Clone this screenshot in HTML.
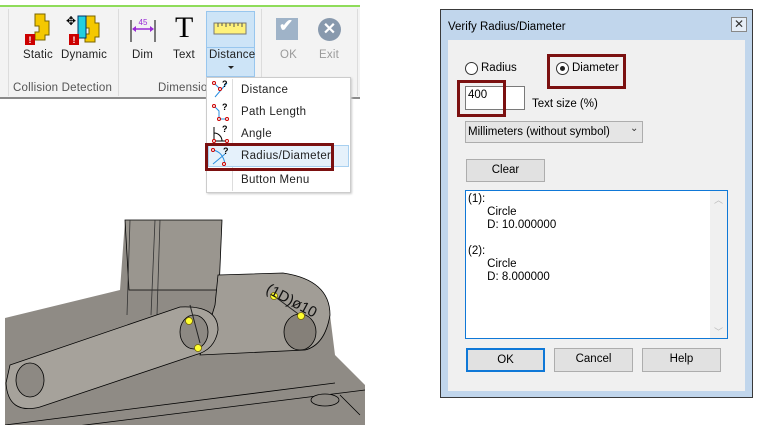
<!DOCTYPE html>
<html><head><meta charset="utf-8"><style>
*{margin:0;padding:0;box-sizing:border-box}
body{width:760px;height:425px;background:#fff;position:relative;overflow:hidden;font-family:"Liberation Sans",sans-serif;font-size:11.5px;color:#000}
.a{position:absolute}
.rib{left:0;top:7px;width:360px;height:92px;background:#f3f3f3;border-bottom:2px solid #8a8a8a}
.lbl{position:absolute;font-size:11.5px;color:#222;letter-spacing:0.2px}
.gl{position:absolute;font-size:11.5px;color:#555;letter-spacing:0.2px}
.sep{position:absolute;width:1px;background:#dcdcdc}
.mi{position:absolute;left:241px;font-size:11.5px;color:#222;letter-spacing:0.3px}
.red{position:absolute;border:3px solid #7b1010}
.btn{position:absolute;background:#e1e1e1;border:1px solid #adadad;text-align:center;font-size:11.5px;line-height:21px}
</style></head><body>
<div class="a" style="left:0;top:5px;width:360px;height:2px;background:#8fdc5a"></div>
<div class="a rib"></div>
<div class="sep" style="left:8px;top:9px;height:87px"></div>
<div class="sep" style="left:118px;top:9px;height:87px"></div>
<div class="sep" style="left:261px;top:9px;height:87px"></div>
<div class="sep" style="left:357px;top:9px;height:87px"></div>
<svg class="a" style="left:22px;top:12px" width="90" height="36">
 <path d="M13 2h10v7h4v14h-4v5h-10v-8h4v-6h-4z" fill="#f4c800" stroke="#7a6400"/>
 <rect x="3" y="22" width="10" height="11" fill="#c00"/><text x="8" y="31" font-size="9" font-weight="bold" fill="#fff" text-anchor="middle">!</text>
 <path d="M63 4h10v7h4v14h-4v5h-10v-8h4v-6h-4z" fill="#f4c800" stroke="#7a6400"/>
 <path d="M56 4h8v22h-8z" fill="#22cfe0" stroke="#036"/>
 <text x="49" y="13" font-size="12" text-anchor="middle">✥</text>
 <rect x="47" y="22" width="10" height="11" fill="#c00"/><text x="52" y="31" font-size="9" font-weight="bold" fill="#fff" text-anchor="middle">!</text>
</svg>
<div class="lbl" style="left:23px;top:49px">Static</div>
<div class="lbl" style="left:61px;top:49px">Dynamic</div>
<div class="gl" style="left:13px;top:82px">Collision Detection</div>
<svg class="a" style="left:128px;top:16px" width="30" height="26">
 <line x1="3" y1="4" x2="3" y2="26" stroke="#000"/><line x1="27" y1="4" x2="27" y2="26" stroke="#000"/>
 <line x1="5" y1="13" x2="25" y2="13" stroke="#9a2bd6" stroke-width="1.5"/>
 <path d="M4 13l4-3v6zM26 13l-4-3v6z" fill="#9a2bd6"/>
 <text x="15" y="9" font-size="8" fill="#9a2bd6" text-anchor="middle">45</text>
</svg>
<div class="lbl" style="left:132px;top:49px">Dim</div>
<div class="a" style="left:175px;top:11px;font-family:'Liberation Serif',serif;font-size:30px">T</div>
<div class="lbl" style="left:173px;top:49px">Text</div>
<div class="a" style="left:206px;top:11px;width:49px;height:66px;background:#cde4f7;border:1px solid #98c6ee"></div>
<div class="a" style="left:207px;top:47px;width:47px;height:1px;background:#98c6ee"></div>
<svg class="a" style="left:213px;top:22px" width="34" height="14"><rect x="1" y="1" width="32" height="11" fill="#fff27a" stroke="#777"/><path d="M5 1v4M9 1v3M13 1v4M17 1v3M21 1v4M25 1v3M29 1v4" stroke="#555"/></svg>
<div class="lbl" style="left:209px;top:49px">Distance</div>
<div class="a" style="left:228px;top:66px;width:0;height:0;border-left:3px solid transparent;border-right:3px solid transparent;border-top:3px solid #222"></div>
<div class="gl" style="left:158px;top:82px">Dimensio</div>
<div class="a" style="left:276px;top:18px;width:22px;height:22px;background:#9fb3c8"></div>
<div class="a" style="left:279px;top:16px;color:#fff;font-size:17px;font-weight:bold">✔</div>
<div class="a" style="left:318px;top:18px;width:23px;height:23px;border-radius:50%;background:#8899ad;color:#fff;font-size:16px;font-weight:bold;text-align:center;line-height:23px">✕</div>
<div class="lbl" style="left:280px;top:49px;color:#9a9a9a">OK</div>
<div class="lbl" style="left:319px;top:49px;color:#9a9a9a">Exit</div>
<div class="a" style="left:206px;top:77px;width:145px;height:116px;background:#fff;border:1px solid #ccc;box-shadow:1px 1px 2px #ccc"></div>
<div class="a" style="left:232px;top:79px;width:1px;height:112px;background:#ddd"></div>
<div class="a" style="left:208px;top:145px;width:141px;height:22px;background:#e5f1fb;border:1px solid #a8d0f0"></div>
<svg class="a" style="left:211px;top:80px" width="20" height="110" font-size="9" font-weight="bold">
 <path d="M3 3l6 6M16 3l-12 14" stroke="#2a8fe0"/><circle cx="9" cy="9" r="1.5" fill="#fff" stroke="#c00"/><circle cx="3" cy="3" r="1.5" fill="#fff" stroke="#c00"/><text x="11" y="7">?</text>
 <path d="M3 26l5 5v8h8" stroke="#2a8fe0" fill="none"/><circle cx="3" cy="26" r="1.5" fill="#fff" stroke="#c00"/><circle cx="8" cy="39" r="1.5" fill="#fff" stroke="#c00"/><circle cx="16" cy="39" r="1.5" fill="#fff" stroke="#c00"/><text x="11" y="30">?</text>
 <path d="M3 47v14h13M3 53a8 8 0 0 1 8 8" stroke="#000" fill="none"/><circle cx="3" cy="61" r="1.5" fill="#fff" stroke="#c00"/><circle cx="16" cy="61" r="1.5" fill="#fff" stroke="#c00"/><text x="11" y="52">?</text>
 <path d="M2 70q10 2 12 14M2 84l12-10" stroke="#2a8fe0" fill="none"/><circle cx="2" cy="70" r="1.5" fill="#fff" stroke="#c00"/><circle cx="13" cy="84" r="1.5" fill="#fff" stroke="#c00"/><text x="12" y="74">?</text>
</svg>
<div class="mi" style="top:84px">Distance</div>
<div class="mi" style="top:106px">Path Length</div>
<div class="mi" style="top:128px">Angle</div>
<div class="mi" style="top:150px">Radius/Diameter</div>
<div class="mi" style="top:174px">Button Menu</div>
<div class="red" style="left:205px;top:143px;width:129px;height:28px"></div>
<svg class="a" style="left:0;top:215px" width="370" height="210">
 <path d="M5 103L120 75L125 5L222 5L218 60L283 58Q330 65 330 100L335 140L365 170L365 210L5 210Z" fill="#8f8b85"/>
 <path d="M125 5h97l-3 70h-90z" fill="#9a968f" stroke="#000" stroke-width="0.8"/>
 <path d="M130 5l-3 95M160 5l-3 95M155 5l-4 95" stroke="#333" stroke-width="0.8"/>
 <path d="M218 60L283 58Q330 65 330 100Q325 130 305 135L200 140L215 90Z" fill="#a19d96" stroke="#000" stroke-width="0.8"/>
 <ellipse cx="300" cy="117" rx="16" ry="18" fill="#858079" stroke="#000" stroke-width="0.8"/>
 <path d="M10 150L180 92Q218 90 218 115Q215 135 195 140L40 192Q8 200 6 168Z" fill="#a6a29b" stroke="#000" stroke-width="0.8"/>
 <ellipse cx="194" cy="117" rx="14" ry="17" fill="#8d8983" stroke="#000" stroke-width="0.8"/>
 <ellipse cx="30" cy="165" rx="14" ry="17" fill="#8d8983" stroke="#000" stroke-width="0.8"/>
 <path d="M5 210L335 168M5 220L365 175M340 180L360 200" stroke="#000" stroke-width="0.8"/>
 <ellipse cx="325" cy="185" rx="14" ry="6" fill="#8d8983" stroke="#000" stroke-width="0.8"/>
 <path d="M190 90L200 128M274 81L301 101" stroke="#222" stroke-width="1"/>
 <g fill="#ffff30" stroke="#776600" stroke-width="0.8"><circle cx="189" cy="106" r="3.5"/><circle cx="198" cy="133" r="3.5"/><circle cx="274" cy="81" r="3.5"/><circle cx="301" cy="101" r="3.5"/></g>
 <text x="0" y="0" font-size="15" transform="translate(265,77) rotate(28)" fill="#111">(1D)ø10</text>
</svg>
<div class="a" style="left:440px;top:9px;width:313px;height:389px;background:#c1d6ec;border:1px solid #3a3a3a"></div>
<div class="a" style="left:448px;top:21px">Verify Radius/Diameter</div>
<div class="a" style="left:731px;top:17px;width:16px;height:15px;border:1px solid #888;background:#e6eef7;font-size:12px;text-align:center;line-height:13px;color:#333">✕</div>
<div class="a" style="left:448px;top:40px;width:297px;height:351px;background:#f0f0f0"></div>
<div class="a" style="left:465px;top:62px;width:13px;height:13px;border:1px solid #333;border-radius:50%;background:#fff"></div>
<div class="a" style="left:481px;top:62px">Radius</div>
<div class="a" style="left:556px;top:62px;width:13px;height:13px;border:1px solid #333;border-radius:50%;background:#fff"></div>
<div class="a" style="left:560px;top:66px;width:5px;height:5px;border-radius:50%;background:#222"></div>
<div class="a" style="left:572px;top:62px">Diameter</div>
<div class="red" style="left:547px;top:54px;width:79px;height:35px"></div>
<div class="a" style="left:465px;top:86px;width:60px;height:24px;background:#fff;border:1px solid #7a7a7a"></div>
<div class="a" style="left:468px;top:89px">400</div>
<div class="red" style="left:457px;top:80px;width:49px;height:37px"></div>
<div class="a" style="left:532px;top:98px">Text size (%)</div>
<div class="a" style="left:465px;top:121px;width:178px;height:22px;background:#e5e5e5;border:1px solid #adadad"></div>
<div class="a" style="left:468px;top:126px">Millimeters (without symbol)</div>
<div class="a" style="left:630px;top:123px;font-size:10px;color:#333">⌄</div>
<div class="btn" style="left:466px;top:159px;width:79px;height:23px">Clear</div>
<div class="a" style="left:465px;top:190px;width:263px;height:149px;background:#fff;border:1px solid #0f78d7"></div>
<div class="a" style="left:710px;top:191px;width:17px;height:147px;background:#f0f0f0"></div>
<div class="a" style="left:714px;top:193px;font-size:9px;color:#bbb">︿</div>
<div class="a" style="left:714px;top:325px;font-size:9px;color:#bbb">﹀</div>
<div class="a" style="left:468px;top:193px;line-height:13px">(1):<br>&nbsp;&nbsp;&nbsp;&nbsp;&nbsp;&nbsp;Circle<br>&nbsp;&nbsp;&nbsp;&nbsp;&nbsp;&nbsp;D: 10.000000<br><br>(2):<br>&nbsp;&nbsp;&nbsp;&nbsp;&nbsp;&nbsp;Circle<br>&nbsp;&nbsp;&nbsp;&nbsp;&nbsp;&nbsp;D: 8.000000</div>
<div class="btn" style="left:466px;top:348px;width:79px;height:24px;border:2px solid #0f78d7;line-height:20px">OK</div>
<div class="btn" style="left:554px;top:348px;width:79px;height:24px">Cancel</div>
<div class="btn" style="left:642px;top:348px;width:79px;height:24px">Help</div>
</body></html>
